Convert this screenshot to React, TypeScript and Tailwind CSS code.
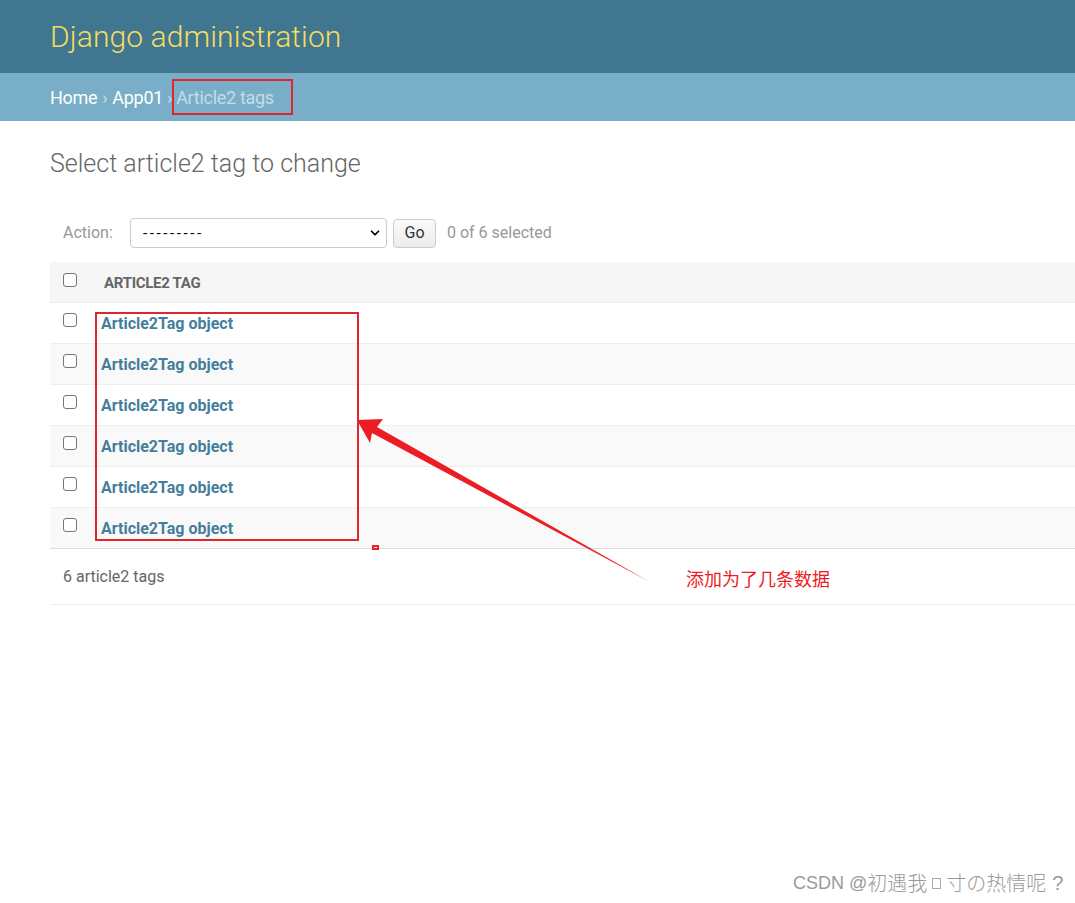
import { ChevronDown } from "lucide-react"

const rows = [0, 1, 2, 3, 4, 5]

function Box() {
  return <span className="block w-[14px] h-[14px] rounded-[3px] border border-[#767676] bg-white" />
}

export default function App() {
  return (
    <div className="relative min-h-[903px] bg-white font-['Roboto',sans-serif] text-[#333]">
      {/* header */}
      <div className="h-[73px] bg-[#417690] flex items-center pl-[50px]">
        <h1 className="text-[30px] font-light text-[#f5dd5d] tracking-[0.1px] leading-none">
          Django administration
        </h1>
      </div>
      <div className="h-[48px] bg-[#79aec8] flex items-center pl-[50px] text-[18px] tracking-[-0.3px] text-white">
        <span>Home</span>
        <span className="mx-[5px] text-[#c4dce8]">›</span>
        <span>App01</span>
        <span className="mx-[4px] text-[#c4dce8]">›</span>
        <span className="text-[#c4dce8]">Article2 tags</span>
      </div>

      <div className="pl-[50px]">
        <h2 className="mt-[28px] text-[25px] font-light text-[#666] leading-[30px] tracking-[0px]">
          Select article2 tag to change
        </h2>

        {/* actions */}
        <div className="mt-[39px] flex items-center h-[30px] pl-[13px] text-[16px]">
          <span className="text-[#999] w-[67px]">Action:</span>
          <div className="w-[257px] h-[30px] border border-[#ccc] rounded-[4px] flex items-center justify-between pl-[12px] pr-[4px] text-black">
            <span className="tracking-[2.6px] text-[15px]">---------</span>
            <ChevronDown className="w-[14px] h-[14px]" strokeWidth={3} />
          </div>
          <div className="ml-[6px] w-[43px] h-[29px] border border-[#ccc] rounded-[4px] bg-gradient-to-b from-[#fafafa] to-[#ececec] flex items-center justify-center text-[16px] text-[#333]">
            Go
          </div>
          <span className="ml-[11px] text-[#999] text-[16px]">0 of 6 selected</span>
        </div>

        {/* table */}
        <div className="mt-[14px]">
          <div className="h-[41px] bg-[#f6f6f6] flex items-center border-b border-[#eee]">
            <div className="w-[54px] pl-[13px] -mt-[5px]">
              <Box />
            </div>
            <span className="text-[15px] font-bold text-[#666] uppercase tracking-[-0.3px] mt-[3px]">
              Article2 tag
            </span>
          </div>
          {rows.map((i) => (
            <div
              key={i}
              className={`h-[41px] flex items-center border-b ${
                i === 5 ? "border-[#ddd]" : "border-[#eee]"
              } ${i % 2 === 1 ? "bg-[#f9f9f9]" : "bg-white"}`}
            >
              <div className="w-[51px] pl-[13px] -mt-[6px]">
                <Box />
              </div>
              <span className="text-[16px] font-bold text-[#447e9b] tracking-[0px] mt-[2px]">
                Article2Tag object
              </span>
            </div>
          ))}
        </div>

        <div className="h-[56px] flex items-center pl-[13px] border-b border-[#eee] text-[16px] text-[#666]">
          6 article2 tags
        </div>
      </div>

      {/* annotations */}
      <div className="absolute left-[172px] top-[79px] w-[121px] h-[36px] border-2 border-[#e0262d]" />
      <div className="absolute left-[95px] top-[312px] w-[264px] h-[229px] border-2 border-[#e0262d]" />
      <div className="absolute left-[372px] top-[545px] w-[7px] h-[5px] border-2 border-[#e0262d]" />
      <svg className="absolute left-0 top-0" width="1075" height="903" viewBox="0 0 1075 903">
        <polygon
          points="357,420 383,419 377,427 650,582 372,433 370,443"
          fill="#ec1c24"
        />
      </svg>
      <div className="absolute left-[686px] top-[566px] text-[18px] leading-[24px] text-[#ec1c24] font-['Noto_Sans_CJK_SC',sans-serif]">
        添加为了几条数据
      </div>
      <div className="absolute left-[793px] top-[869px] flex items-center text-[18px] leading-[28px] text-[#9a9a9a]">
        <span className="font-['Liberation_Sans',sans-serif]">CSDN @</span>
        <span className="text-[20px] font-light font-['Noto_Sans_CJK_SC',sans-serif]">初遇我</span>
        <span className="mx-[5px] w-[9px] h-[11px] border border-[#aaa]" />
        <span className="text-[20px] font-light font-['Noto_Sans_CJK_SC',sans-serif]">寸の热情呢</span>
        <span className="ml-[6px] text-[20px] font-['Liberation_Sans',sans-serif]">?</span>
      </div>
    </div>
  )
}
